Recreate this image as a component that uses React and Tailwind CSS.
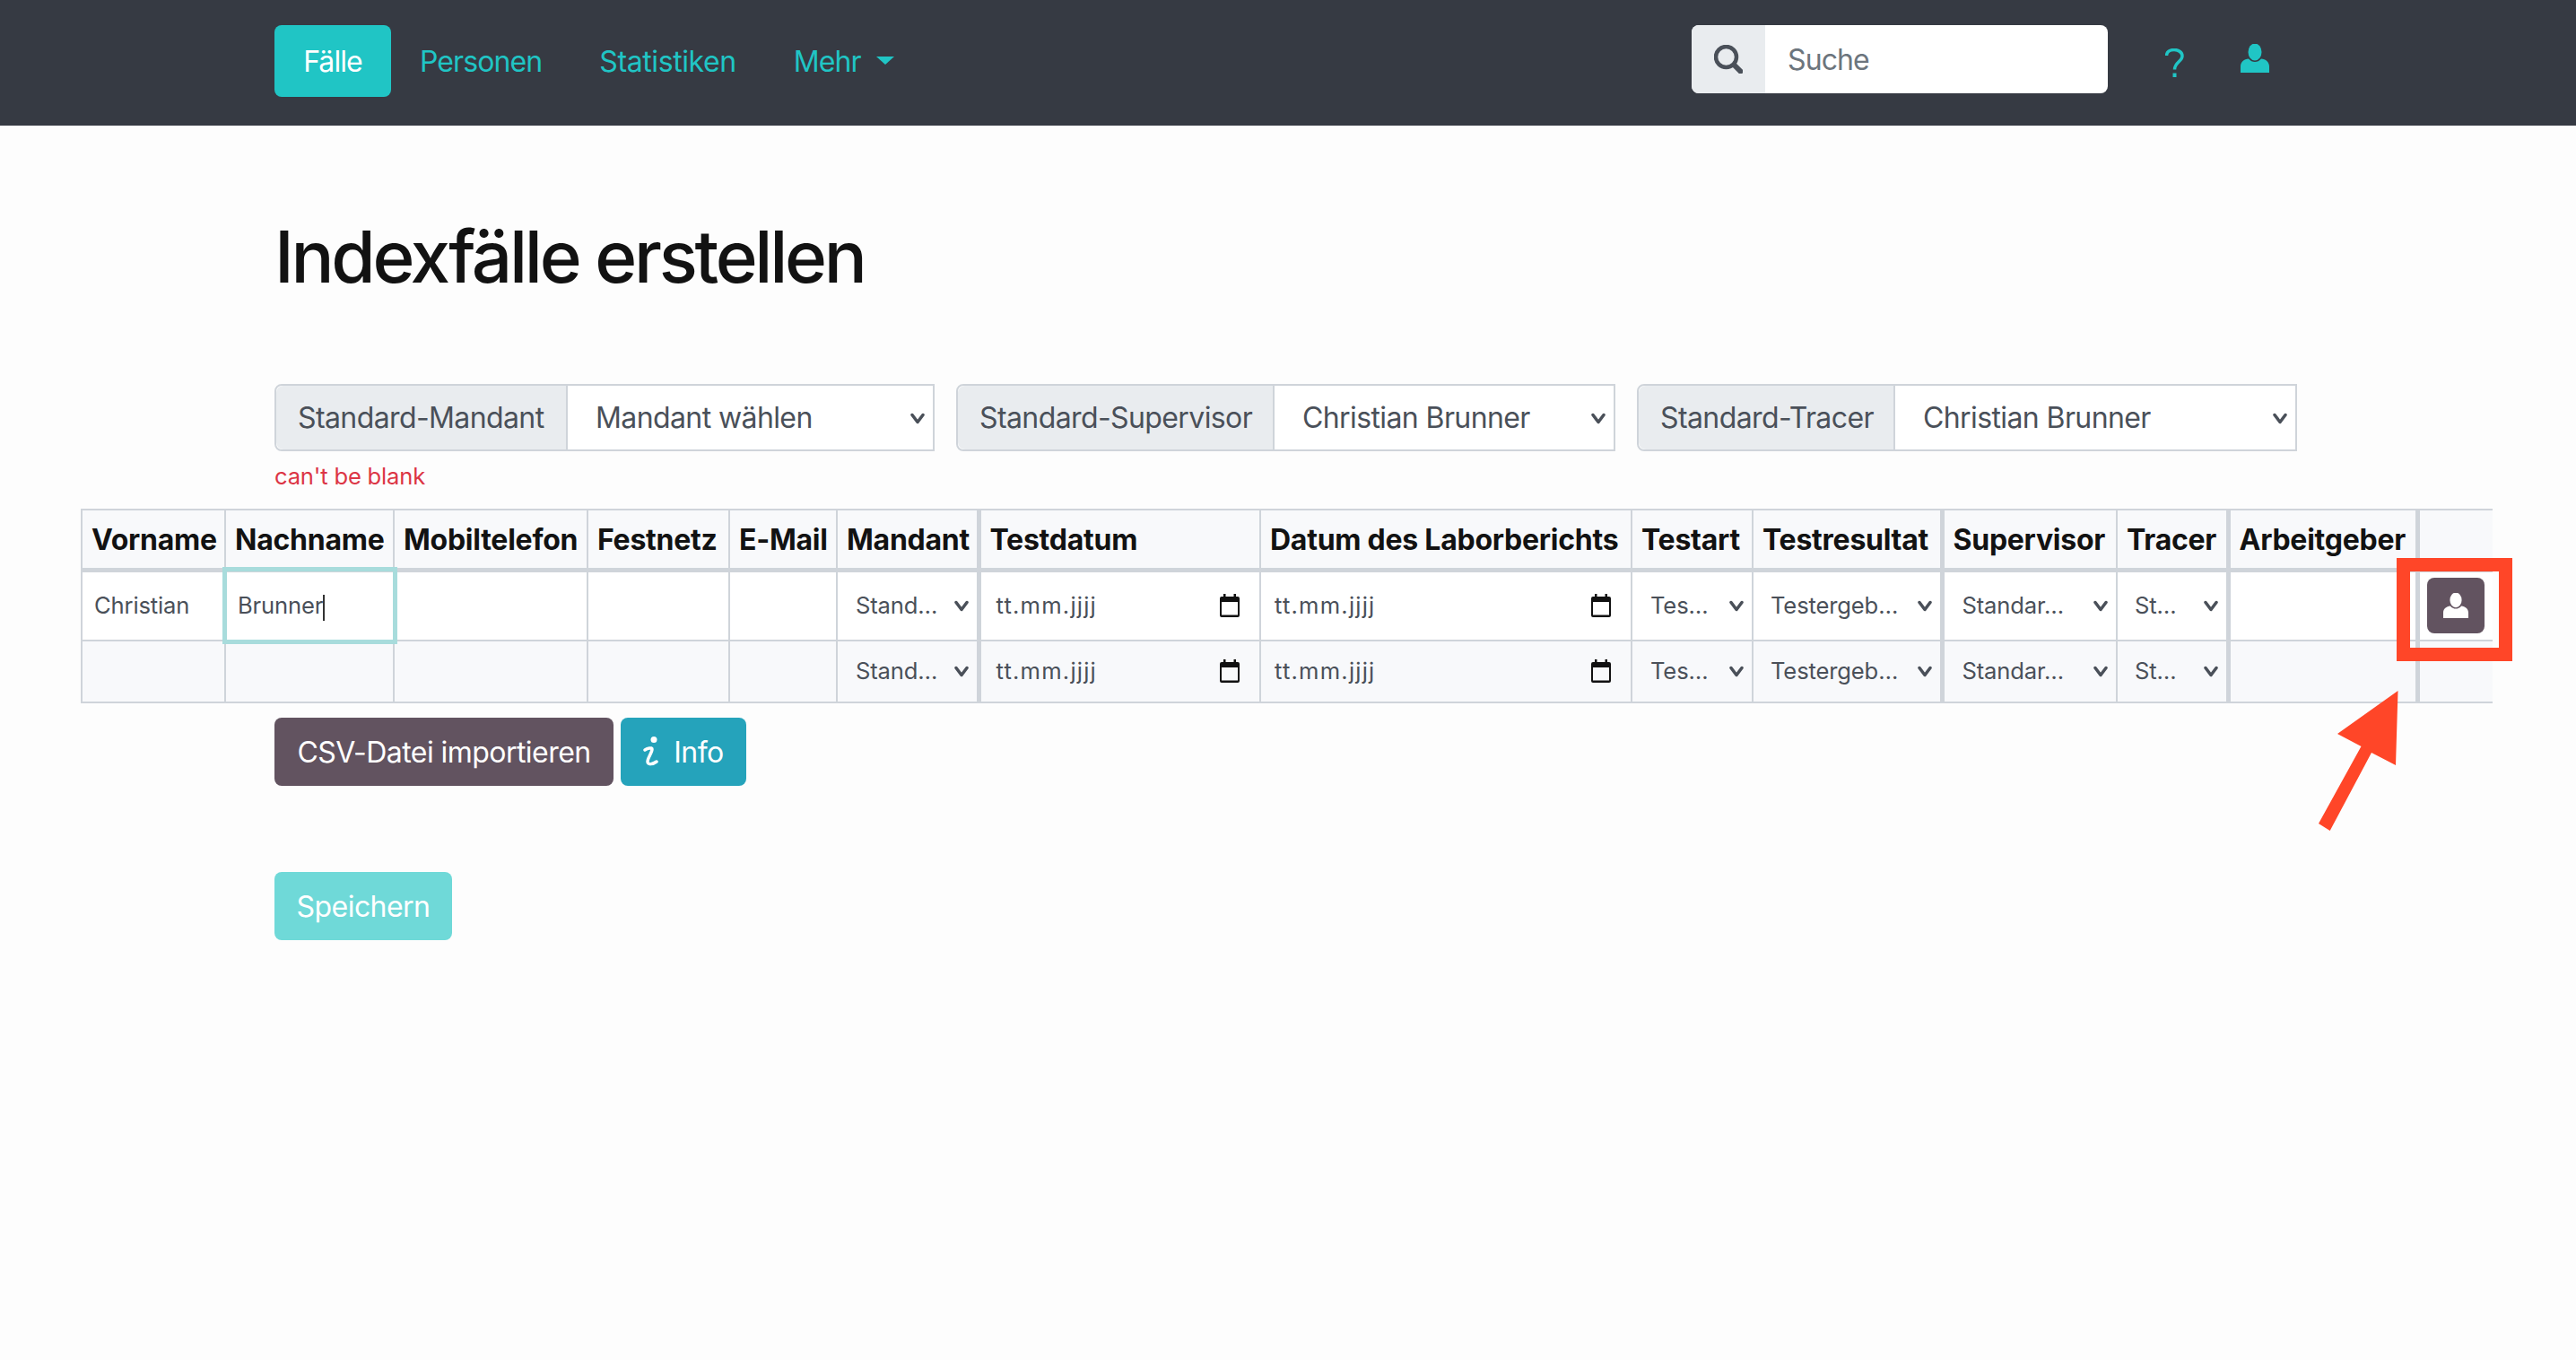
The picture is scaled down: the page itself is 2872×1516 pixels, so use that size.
const columns = [
  { title: "Vorname", width: "w-[160px]" },
  { title: "Nachname", width: "w-[188px]" },
  { title: "Mobiltelefon", width: "w-[216px]" },
  { title: "Festnetz", width: "w-[158px]" },
  { title: "E-Mail", width: "w-[120px]" },
  { title: "Mandant", width: "w-[158px]" },
  { title: "Testdatum", width: "w-[314px]", thick: true },
  { title: "Datum des Laborberichts", width: "w-[414px]" },
  { title: "Testart", width: "w-[135px]" },
  { title: "Testresultat", width: "w-[211px]" },
  { title: "Supervisor", width: "w-[195px]", thick: true },
  { title: "Tracer", width: "w-[124px]" },
  { title: "Arbeitgeber", width: "w-[211px]", thick: true },
  { title: "", width: "w-[84px]", thick: true },
];

function Chevron({ className }) {
  return (
    <svg viewBox="0 0 16 16" className={className} fill="none" stroke="#4a5059" strokeWidth="3.500" strokeLinecap="round" strokeLinejoin="round">
      <path d="M2 4.500l6 8 6-8" />
    </svg>
  );
}

function CalendarIcon() {
  return (
    <svg viewBox="0 0 24 26" className="w-[24px] h-[26px] shrink-0" fill="#111">
      <rect x="5" y="0" width="2.5" height="4" />
      <rect x="16.5" y="0" width="2.5" height="4" />
      <path d="M3 3h18a2 2 0 0 1 2 2v19a2 2 0 0 1-2 2H3a2 2 0 0 1-2-2V5a2 2 0 0 1 2-2zm0 6v14.5h18V9z" fillRule="evenodd" />
    </svg>
  );
}

function UserIcon({ className, fill }) {
  return (
    <svg viewBox="0 0 32 32" className={className} fill={fill}>
      <ellipse cx="16" cy="9" rx="7.5" ry="9.5" />
      <path d="M0 32v-7c0-5 4-8 9-8.5 2 2.5 4.500 3.500 7 3.500s5-1 7-3.500c5 .5 9 3.500 9 8.500v7z" />
    </svg>
  );
}

function InputGroup({ label, value, labelWidth, width }) {
  return (
    <div className={`flex h-[75px] border-2 border-[#cfd4da] rounded-l-lg bg-white text-[32px] tracking-[-0.6px] text-[#4a5059] ${width}`}>
      <div className={`flex items-center pl-[24px] pt-[1px] bg-[#e9ecef] border-r-2 border-[#cfd4da] rounded-l-lg ${labelWidth}`}>{label}</div>
      <div className="flex flex-1 items-center justify-between pl-[31px] pt-[1px] pr-[9px]">
        <span>{value}</span>
        <Chevron className="w-[16px] h-[16px]" />
      </div>
    </div>
  );
}

function SelectCell({ text, pad }) {
  return (
    <div className={`flex items-center justify-between pr-[9px] ${pad}`}>
      <span>{text}</span>
      <Chevron className="w-[16px] h-[16px] shrink-0" />
    </div>
  );
}

function DateCell({ pad }) {
  return (
    <div className={`flex items-center justify-between pr-[21px] ${pad}`}>
      <span className="tracking-[1.2px]">tt.mm.jjjj</span>
      <CalendarIcon />
    </div>
  );
}

function Row({ height, bg, first }) {
  const cell = (thick) =>
    `p-0 border-b-2 border-[#cfd4da] align-middle ${thick ? "border-l-[5px]" : "border-l-2"}`;
  return (
    <tr className={`${height} ${bg}`}>
      <td className={cell(false)}>{first && <span className="pl-[13px]">Christian</span>}</td>
      <td className={`${cell(false)} relative`}>
        {first && (
          <>
            <span className="pl-[13px]">Brunner</span>
            <span className="inline-block w-[2px] h-[29px] bg-[#333] align-middle" />
            <span className="absolute -left-[4px] -top-[6px] -right-[5px] -bottom-[5px] border-[5px] border-[#a8dcdc] pointer-events-none" />
          </>
        )}
      </td>
      <td className={cell(false)} />
      <td className={cell(false)} />
      <td className={cell(false)} />
      <td className={cell(false)}><SelectCell text="Stand…" pad="pl-[20px]" /></td>
      <td className={cell(true)}><DateCell pad="pl-[17px]" /></td>
      <td className={cell(false)}><DateCell pad="pl-[15px]" /></td>
      <td className={cell(false)}><SelectCell text="Tes…" pad="pl-[20px]" /></td>
      <td className={cell(false)}><SelectCell text="Testergeb…" pad="pl-[19px]" /></td>
      <td className={cell(true)}><SelectCell text="Standar…" pad="pl-[20px]" /></td>
      <td className={cell(false)}><SelectCell text="St…" pad="pl-[19px]" /></td>
      <td className={cell(true)} />
      <td className={`${cell(true)} relative`}>
        {first && (
          <div className="flex justify-center">
            <button className="flex items-center justify-center w-[64px] h-[62px] rounded-lg bg-[#625360]">
              <UserIcon className="w-[28px] h-[28px]" fill="#fff" />
            </button>
          </div>
        )}
      </td>
    </tr>
  );
}

export default function App() {
  return (
    <div className="relative min-h-[1516px] bg-[#fdfdfd] text-[#121212] font-['Inter',sans-serif]">
      {/* Navbar */}
      <nav className="flex items-start h-[140px] pt-[28px] pl-[306px] bg-[#363a43] text-[32px] tracking-[-0.9px] text-[#20c5c5]">
        <a className="flex items-center justify-center w-[130px] h-[80px] pt-[2px] rounded-lg bg-[#20c5c5] text-white">Fälle</a>
        <a className="flex items-center h-[80px] pt-[2px] pl-[32px] pr-[32px]">Personen</a>
        <a className="flex items-center h-[80px] pt-[2px] px-[32px] tracking-[-0.4px]">Statistiken</a>
        <a className="flex items-center h-[80px] pt-[2px] pl-[32px]">
          Mehr
          <span className="ml-[17px] mb-[4px] w-0 h-0 border-x-[10px] border-x-transparent border-t-[9px] border-t-[#20c5c5]" />
        </a>
        <div className="flex h-[76px] w-[464px] ml-auto rounded-lg overflow-hidden bg-white">
          <div className="flex items-center justify-center w-[82px] bg-[#e9ecef]">
            <svg viewBox="0 0 32 32" className="w-[32px] h-[32px]" fill="none" stroke="#4a5059" strokeWidth="4.500" strokeLinecap="round">
              <circle cx="13.5" cy="13.5" r="11.500" />
              <path d="M23 23l6.500 6.500" strokeWidth="6" />
            </svg>
          </div>
          <div className="flex items-center pt-[2px] pl-[25px] text-[#6c757d]">Suche</div>
        </div>
        <div className="flex items-center h-[76px] ml-[64px] pr-[342px] gap-[63px]">
          <svg viewBox="0 0 21 32" className="w-[21px] h-[32px] mt-[8px]" fill="none" stroke="#20c5c5" strokeWidth="3.500">
            <path d="M1.500 8c0-4 3.500-6.500 8.500-6.500s9 3 9 7c0 6-8.500 7-8.500 15" />
            <path d="M10.500 27.500v4.500" strokeWidth="4" />
          </svg>
          <UserIcon className="w-[32px] h-[32px] -mt-[2px]" fill="#20c5c5" />
        </div>
      </nav>

      <main>
        <div className="pl-[306px]">
          <h1 className="pt-[100px] h-[288px] text-[80px] leading-[92px] font-medium tracking-[-3.3px]">Indexfälle erstellen</h1>
          <div className="flex gap-[24px]">
            <InputGroup label="Standard-Mandant" value="Mandant wählen" labelWidth="w-[325px]" width="w-[736px]" />
            <InputGroup label="Standard-Supervisor" value="Christian Brunner" labelWidth="w-[353px]" width="w-[735px]" />
            <InputGroup label="Standard-Tracer" value="Christian Brunner" labelWidth="w-[286px]" width="w-[736px]" />
          </div>
          <p className="h-[64px] pt-[10px] text-[25.6px] tracking-[-0.2px] leading-[36px] text-[#dc3545]">can't be blank</p>
        </div>

        <table className="table-fixed ml-[90px] w-[2688px] border-collapse text-[25.6px] tracking-[-0.15px] text-[#4a5059]">
          <colgroup>
            {columns.map((col) => (
              <col key={col.title} className={col.width} />
            ))}
          </colgroup>
          <thead>
            <tr className="h-[67px] bg-[#f8f9fb]">
              {columns.map((col) => (
                <th
                  key={col.title}
                  className={`p-0 pl-[10px] pt-[2px] text-left text-[32px] tracking-[-0.25px] font-bold text-[#121212] whitespace-nowrap border-t-2 border-b-[5px] border-[#cfd4da] ${col.thick ? "border-l-[5px]" : "border-l-2"}`}
                >
                  {col.title}
                </th>
              ))}
            </tr>
          </thead>
          <tbody>
            <Row height="h-[79px]" bg="bg-white" first />
            <Row height="h-[69px]" bg="bg-[#f8f9fb]" />
          </tbody>
        </table>

        <div className="pl-[306px] pt-[16px] text-[32px] tracking-[-0.55px] text-white">
          <div className="flex gap-[8px]">
            <button className="h-[76px] w-[378px] pt-[2px] rounded-lg bg-[#625360]">CSV-Datei importieren</button>
            <button className="flex items-center justify-center gap-[16px] h-[76px] w-[140px] pt-[2px] rounded-lg bg-[#25a3bb]">
              <svg viewBox="0 0 18 33" className="w-[18px] h-[33px] -mt-[4px]" fill="none" stroke="#fff" strokeWidth="3.500" strokeLinecap="round">
                <circle cx="12" cy="3.500" r="3.500" fill="#fff" stroke="none" />
                <path d="M2 15c3-2 8-3 8-1 0 4-5 10-5 14 0 4 6 3 10 0" />
              </svg>
              Info
            </button>
          </div>
          <button className="mt-[96px] h-[76px] w-[198px] pt-[2px] rounded-lg bg-[#6fd9d8]">Speichern</button>
        </div>
      </main>

      {/* Red annotation over the page */}
      <div className="absolute left-[2672px] top-[622px] w-[129px] h-[115px] border-[15px] border-[#ff4628] pointer-events-none" />
      <svg viewBox="0 0 2872 1516" className="absolute inset-0 w-[2872px] h-[1516px] pointer-events-none">
        <polygon points="2673.500,770 2606,818 2632.500,832 2585,918 2597.700,926 2644,839 2671,853" fill="#ff4628" />
      </svg>
    </div>
  );
}
